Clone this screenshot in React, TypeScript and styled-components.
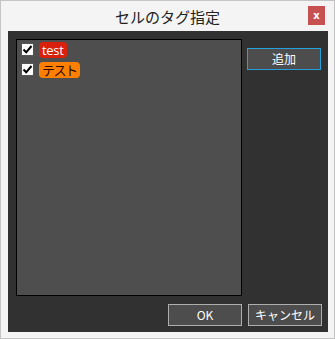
import styled, { createGlobalStyle } from "styled-components";

const GlobalStyle = createGlobalStyle`
  html, body {
    margin: 0;
    padding: 0;
    background: #f0f0f0;
  }
  * {
    box-sizing: border-box;
  }
`;

interface Tag {
  name: string;
  bg: string;
  fg: string;
  checked: boolean;
  spacing: number;
}

const tags: Tag[] = [
  { name: "test", bg: "#d8200c", fg: "#ffffff", checked: true, spacing: -0.3 },
  { name: "テスト", bg: "#ff8000", fg: "#2a0800", checked: true, spacing: -1.5 },
];

const App = () => {
  return (
    <>
      <GlobalStyle />
      <Window>
        <TitleBar>
          <Title>セルのタグ指定</Title>
          <CloseButton>x</CloseButton>
        </TitleBar>
        <Body>
          <TopRow>
            <TagList>
              {tags.map((tag) => (
                <TagRow key={tag.name}>
                  <CheckBox>
                    {tag.checked && (
                      <svg width="11" height="11" viewBox="0 0 11 11">
                        <path
                          d="M1.5 5.5 L4.2 8.3 L9.5 2"
                          fill="none"
                          stroke="#000"
                          strokeWidth="2"
                        />
                      </svg>
                    )}
                  </CheckBox>
                  <TagLabel bg={tag.bg} fg={tag.fg} spacing={tag.spacing}>
                    {tag.name}
                  </TagLabel>
                </TagRow>
              ))}
            </TagList>
            <SideColumn>
              <DialogButton focused>追加</DialogButton>
            </SideColumn>
          </TopRow>
          <BottomRow>
            <DialogButton>OK</DialogButton>
            <DialogButton>キャンセル</DialogButton>
          </BottomRow>
        </Body>
      </Window>
    </>
  );
};

export default App;

const Window = styled.div`
  width: 335px;
  height: 339px;
  border: 1px solid #c4c4c4;
  background: #f4f4f4;
  display: flex;
  flex-direction: column;
  font-family: "Noto Sans CJK JP", "Noto Sans", sans-serif;
`;

const TitleBar = styled.div`
  height: 30px;
  flex-shrink: 0;
  position: relative;
  display: flex;
  align-items: center;
  justify-content: center;
`;

const Title = styled.div`
  font-size: 15px;
  color: #222;
  line-height: 1;
`;

const CloseButton = styled.div`
  position: absolute;
  right: 9px;
  top: 5px;
  width: 17px;
  height: 19px;
  background: #c75050;
  color: #fff;
  font-family: "DejaVu Sans", sans-serif;
  font-weight: bold;
  font-size: 10px;
  display: flex;
  align-items: center;
  justify-content: center;
`;

const Body = styled.div`
  margin: 0 6px 6px 7px;
  flex: 1;
  background: #313131;
  padding: 8px 6px 5px 8px;
  display: flex;
  flex-direction: column;
  gap: 8px;
`;

const TopRow = styled.div`
  height: 257px;
  display: flex;
  gap: 5px;
`;

const TagList = styled.div`
  width: 226px;
  height: 100%;
  border: 1px solid #000;
  background: #4e4e4e;
  padding: 1px 4px;
  display: flex;
  flex-direction: column;
  gap: 3px;
`;

const TagRow = styled.div`
  display: flex;
  align-items: center;
  height: 17px;
  gap: 5px;
`;

const CheckBox = styled.span`
  width: 13px;
  height: 13px;
  background: #fff;
  border: 1px solid #555;
  display: flex;
  align-items: center;
  justify-content: center;
`;

const TagLabel = styled.span<{ bg: string; fg: string; spacing: number }>`
  background: ${({ bg }) => bg};
  color: ${({ fg }) => fg};
  border-radius: 4px;
  padding: 0 3px;
  height: 16px;
  font-family: "Open Sans", "Noto Sans CJK JP", sans-serif;
  font-size: 13px;
  line-height: 16px;
  letter-spacing: ${({ spacing }) => spacing}px;
`;

const SideColumn = styled.div`
  padding-top: 6px;
`;

const DialogButton = styled.button<{ focused?: boolean }>`
  width: 74px;
  height: 22px;
  background: #4d4d4d;
  border: 1px solid ${({ focused }) => (focused ? "#26a0da" : "#adadad")};
  color: #fff;
  font-family: "Noto Sans CJK JP", "Noto Sans", sans-serif;
  font-size: 12px;
  padding: 0;
  line-height: 1;
`;

const BottomRow = styled.div`
  display: flex;
  justify-content: flex-end;
  gap: 6px;
`;
